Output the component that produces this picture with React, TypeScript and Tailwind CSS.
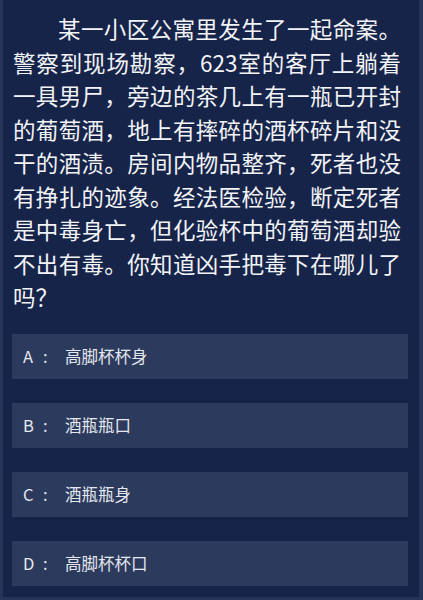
import React from 'react';

const question =
  '某一小区公寓里发生了一起命案。警察到现场勘察，623室的客厅上躺着一具男尸，旁边的茶几上有一瓶已开封的葡萄酒，地上有摔碎的酒杯碎片和没干的酒渍。房间内物品整齐，死者也没有挣扎的迹象。经法医检验，断定死者是中毒身亡，但化验杯中的葡萄酒却验不出有毒。你知道凶手把毒下在哪儿了吗？';

const options = [
  { key: 'A', text: '高脚杯杯身' },
  { key: 'B', text: '酒瓶瓶口' },
  { key: 'C', text: '酒瓶瓶身' },
  { key: 'D', text: '高脚杯杯口' },
];

export default function App() {
  return (
    <div
      className="h-[600px] w-[423px] overflow-hidden bg-[#172449] border-l-[3px] border-r-[4px] border-b-[3px] border-[#263459]"
      style={{ fontFamily: '"Noto Sans CJK SC", "Noto Sans", sans-serif' }}
    >
      {/* 题目 */}
      <p className="ml-[10px] w-[388px] pt-[12px] text-[22.5px] leading-[33.5px] text-[#f2f4f8] indent-[2em] text-justify">
        {question}
      </p>

      {/* 选项 */}
      <div className="mt-[20px] ml-[9px] flex w-[396px] flex-col gap-[24px]">
        {options.map((opt) => (
          <div
            key={opt.key}
            className="flex h-[45px] items-center bg-[#2c3a5d] pl-[11px] text-[16.5px] text-[#e4e8ef]"
          >
            <span className="w-[20px]">{opt.key}</span>
            <span className="w-[22px]">:</span>
            <span>{opt.text}</span>
          </div>
        ))}
      </div>
    </div>
  );
}
